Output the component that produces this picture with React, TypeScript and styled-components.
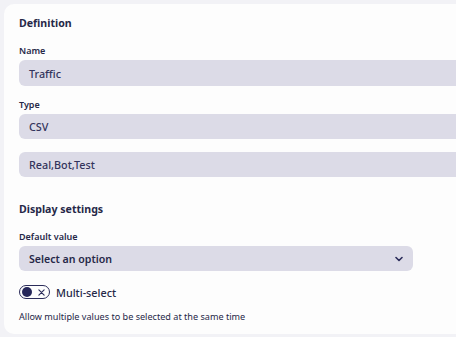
import styled, { createGlobalStyle } from 'styled-components';

const GlobalStyle = createGlobalStyle`
  html, body {
    margin: 0;
    padding: 0;
    background: #f2f2f6;
    overflow: hidden;
  }
  body {
    font-family: 'Noto Sans', 'Open Sans', sans-serif;
    color: #2b2c50;
  }
`;

const Page = styled.div`
  padding: 4px 0 0 4px;
  width: 560px;
`;

const Card = styled.section`
  background: #fdfdfd;
  border-radius: 10px;
  padding: 11px 15px 10px;
  display: flex;
  flex-direction: column;
`;

const SectionTitle = styled.h2<{ $gap?: number }>`
  margin: ${(p) => p.$gap ?? 0}px 0 0;
  font-size: 10.6px;
  line-height: 16px;
  font-weight: 700;
  color: #262848;
`;

const Label = styled.label<{ $gap: number }>`
  display: block;
  margin: ${(p) => p.$gap}px 0 2px;
  font-size: 9px;
  line-height: 14px;
  font-weight: 600;
  color: #262848;
`;

const Field = styled.div<{ $h?: number; $gap?: number }>`
  display: flex;
  align-items: center;
  height: ${(p) => p.$h ?? 25}px;
  margin-top: ${(p) => p.$gap ?? 0}px;
  padding: 0 10px;
  background: #dcdbe7;
  border-radius: 6px;
  font-size: 10.8px;
  font-weight: 500;
  color: #33345c;
`;

const Select = styled.div`
  display: flex;
  align-items: center;
  justify-content: space-between;
  width: 394px;
  height: 25px;
  box-sizing: border-box;
  padding: 0 10px;
  background: #dcdbe7;
  border-radius: 6px;
  font-size: 10.6px;
  font-weight: 600;
  color: #262848;
`;

const ToggleRow = styled.div`
  display: flex;
  align-items: center;
  gap: 6px;
  margin-top: 14px;
  height: 14px;
  font-size: 10.8px;
  font-weight: 500;
  color: #262848;
`;

const Switch = styled.span`
  display: flex;
  align-items: center;
  justify-content: space-between;
  box-sizing: border-box;
  width: 31px;
  height: 14px;
  padding: 0 4px 0 1.5px;
  border: 1.5px solid #2b2c5a;
  border-radius: 7px;
`;

const Knob = styled.span`
  width: 10px;
  height: 10px;
  border-radius: 50%;
  background: #26275a;
`;

const Hint = styled.p`
  margin: 11px 0 0;
  font-size: 9.1px;
  line-height: 14px;
  color: #262848;
`;

export default function App() {
  return (
    <>
      <GlobalStyle />
      <Page>
        <Card>
          <SectionTitle>Definition</SectionTitle>
          <Label $gap={13}>Name</Label>
          <Field $h={26}>Traffic</Field>
          <Label $gap={12}>Type</Label>
          <Field>CSV</Field>
          <Field $gap={13}>Real,Bot,Test</Field>
          <SectionTitle $gap={24}>Display settings</SectionTitle>
          <Label $gap={13}>Default value</Label>
          <Select>
            Select an option
            <svg width="8" height="6" viewBox="0 0 8 6" fill="none">
              <path d="M1 1.5 4 4.5 7 1.5" stroke="#2b2c5a" strokeWidth="1.6" strokeLinecap="round" strokeLinejoin="round" />
            </svg>
          </Select>
          <ToggleRow>
            <Switch>
              <Knob />
              <svg width="7" height="7" viewBox="0 0 8 8" fill="none">
                <path d="M1 1 7 7M7 1 1 7" stroke="#2b2c5a" strokeWidth="1.3" strokeLinecap="round" />
              </svg>
            </Switch>
            Multi-select
          </ToggleRow>
          <Hint>Allow multiple values to be selected at the same time</Hint>
        </Card>
      </Page>
    </>
  );
}
